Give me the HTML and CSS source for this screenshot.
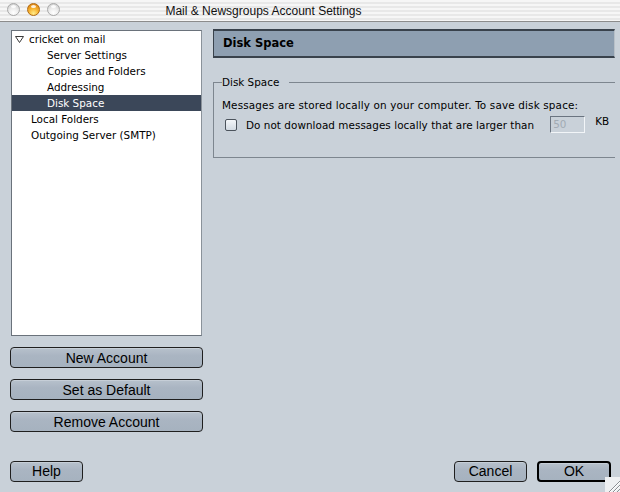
FILE: index.html
```html
<!DOCTYPE html>
<html>
<head>
<meta charset="utf-8">
<title>Mail &amp; Newsgroups Account Settings</title>
<link rel="stylesheet" href="styles.css">
</head>
<body>
<div class="window">
  <div class="titlebar">
    <div class="lights">
      <span class="light gray"></span>
      <span class="light orange"></span>
      <span class="light gray"></span>
    </div>
    <div class="title">Mail &amp; Newsgroups Account Settings</div>
  </div>

  <div class="main">
    <div class="left">
      <div class="tree">
        <div class="row account">
          <svg class="twisty" width="9" height="7" viewBox="0 0 9 7"><polygon points="0.5,0.5 8.5,0.5 4.5,6.5" fill="#fff" stroke="#3a3a3a" stroke-width="1"/></svg>
          <span>cricket on mail</span>
        </div>
        <div class="row child">Server Settings</div>
        <div class="row child">Copies and Folders</div>
        <div class="row child">Addressing</div>
        <div class="row child selected">Disk Space</div>
        <div class="row top">Local Folders</div>
        <div class="row top">Outgoing Server (SMTP)</div>
      </div>
      <div class="actions">
        <button class="btn">New Account</button>
        <button class="btn">Set as Default</button>
        <button class="btn">Remove Account</button>
      </div>
    </div>

    <div class="right">
      <div class="header">Disk Space</div>
      <div class="group">
        <div class="group-head"><span class="group-label">Disk Space</span></div>
        <div class="group-body">
          <p class="desc">Messages are stored locally on your computer. To save disk space:</p>
          <div class="check-row">
            <span class="checkbox"></span>
            <span class="check-label">Do not download messages locally that are larger than</span>
            <span class="num-input">50</span>
            <span class="unit">KB</span>
          </div>
        </div>
      </div>
    </div>
  </div>

  <div class="footer">
    <button class="btn small">Help</button>
    <div class="footer-right">
      <button class="btn small">Cancel</button>
      <button class="btn small default">OK</button>
    </div>
  </div>

  <svg class="grip" width="15" height="15" viewBox="0 0 15 15">
    <rect x="0" y="0" width="15" height="15" fill="#eef0f2"/>
    <line x1="4" y1="15" x2="15" y2="4" stroke="#8a8f94" stroke-width="1"/>
    <line x1="8" y1="15" x2="15" y2="8" stroke="#8a8f94" stroke-width="1"/>
    <line x1="12" y1="15" x2="15" y2="12" stroke="#8a8f94" stroke-width="1"/>
    <line x1="5" y1="15" x2="15" y2="5" stroke="#ffffff" stroke-width="1"/>
    <line x1="9" y1="15" x2="15" y2="9" stroke="#ffffff" stroke-width="1"/>
  </svg>
</div>
</body>
</html>
```

FILE: styles.css
```css
* { box-sizing: border-box; }

html, body {
  margin: 0;
  padding: 0;
  background: #c9d1d9;
}

.window {
  position: relative;
  width: 620px;
  height: 492px;
  display: flex;
  flex-direction: column;
  background: #c9d1d9;
  font-family: "DejaVu Sans", sans-serif;
  font-size: 10.4px;
  color: #000;
  overflow: hidden;
}

/* Title bar */
.titlebar {
  height: 22px;
  flex: 0 0 22px;
  display: flex;
  align-items: center;
  border-bottom: 1px solid #8c8c8c;
  background: repeating-linear-gradient(to bottom, #f6f6f6 0 2px, #e8e8e8 2px 4px);
}

.lights {
  display: flex;
  gap: 7px;
  padding-left: 7px;
  margin-top: -2px;
}

.light {
  position: relative;
  width: 13px;
  height: 13px;
  border-radius: 50%;
}

.light.gray {
  background: radial-gradient(circle at 50% 80%, #ffffff 0, #ececec 45%, #c6c6c6 100%);
  border: 1px solid #a9a9a9;
}

.light.orange {
  background: radial-gradient(circle at 50% 85%, #ffec8a 0, #f7b431 45%, #d8780a 100%);
  border: 1px solid #b06a12;
}

.light::after {
  content: "";
  position: absolute;
  left: 3px;
  top: 1px;
  width: 5px;
  height: 3px;
  border-radius: 50%;
  background: rgba(255, 255, 255, 0.85);
}

.title {
  width: 399px;
  margin-left: 4px;
  text-align: center;
  font-family: "Liberation Sans", Arial, sans-serif;
  font-size: 12px;
  color: #111;
}

/* Main area */
.main {
  flex: 1;
  display: flex;
  gap: 10px;
  padding: 7px 5px 0 10px;
}

.left {
  width: 193px;
  display: flex;
  flex-direction: column;
  padding-top: 1px;
}

.tree {
  height: 306px;
  margin: 0 1px;
  background: #fff;
  border: 1px solid #6a727b;
  border-right-color: #8a929a;
}

.row {
  height: 16px;
  line-height: 16px;
  white-space: nowrap;
}

.row.account {
  display: flex;
  align-items: center;
  padding-left: 3px;
}

.twisty {
  margin-right: 5px;
  margin-top: 1px;
}

.row.child { padding-left: 35px; }
.row.top { padding-left: 19px; }

.row.selected {
  background: #3b4759;
  color: #fff;
}

.actions {
  display: flex;
  flex-direction: column;
  gap: 11px;
  margin-top: 11px;
}

.btn {
  height: 21px;
  padding: 0;
  border: 1px solid #1f1f1f;
  border-radius: 4px;
  background: linear-gradient(to bottom, #b7c1cc 0, #aab5c2 40%, #a6b2bf 100%);
  box-shadow: inset 0 1px 0 #c6ced7;
  font-family: "Liberation Sans", Arial, sans-serif;
  font-size: 14px;
  color: #000;
  line-height: 18px;
}

/* Right panel */
.right {
  width: 402px;
  display: flex;
  flex-direction: column;
}

.header {
  height: 29px;
  border-top: 2px solid #39424c;
  border-bottom: 2px solid #39424c;
  border-left: 1px solid #39424c;
  border-right: 1px solid #b8c0c8;
  background: #8e9fb1;
  padding-left: 9px;
  font-weight: bold;
  font-size: 11.5px;
  line-height: 25px;
}

.group {
  margin-top: 18px;
}

.group-head {
  display: flex;
  align-items: center;
  height: 12px;
}

.group-head::before {
  content: "";
  align-self: stretch;
  width: 8px;
  margin-top: 6px;
  border-top: 1px solid #7d868f;
  border-left: 1px solid #7d868f;
}

.group-head::after {
  content: "";
  flex: 1;
  align-self: stretch;
  margin-top: 6px;
  margin-left: 10px;
  border-top: 1px solid #7d868f;
}

.group-label {
  line-height: 12px;
}

.group-body {
  border-left: 1px solid #7d868f;
  border-bottom: 1px solid #7d868f;
  padding: 10px 0 24px 8px;
}

.desc {
  margin: 0;
  line-height: 14px;
  letter-spacing: 0.16px;
}

.check-row {
  display: flex;
  align-items: center;
  margin-top: 4px;
  height: 17px;
}

.checkbox {
  width: 12px;
  height: 12px;
  margin-left: 3px;
  border: 1px solid #4b535c;
  border-radius: 2px;
  background: linear-gradient(to bottom, #f3f6f9, #d3dbe3);
}

.check-label {
  margin-left: 9px;
  letter-spacing: 0.05px;
}

.num-input {
  width: 35px;
  height: 17px;
  margin-left: 16px;
  border-top: 1px solid #6a7480;
  border-left: 1px solid #6a7480;
  border-bottom: 1px solid #f2f5f8;
  border-right: 1px solid #f2f5f8;
  color: #a2abb4;
  line-height: 15px;
  padding-left: 2px;
}

.unit {
  align-self: flex-start;
  margin-left: 10px;
  margin-top: -1px;
}

/* Footer */
.footer {
  flex: 0 0 auto;
  display: flex;
  justify-content: space-between;
  align-items: center;
  padding: 0 9px 10px 10px;
  height: 32px;
}

.footer-right {
  display: flex;
  gap: 10px;
}

.btn.small {
  width: 73px;
  height: 21px;
}

.btn.default {
  width: 74px;
  border: 2px solid #000;
  line-height: 16px;
}

.grip {
  position: absolute;
  right: 0;
  bottom: 0;
}
```
